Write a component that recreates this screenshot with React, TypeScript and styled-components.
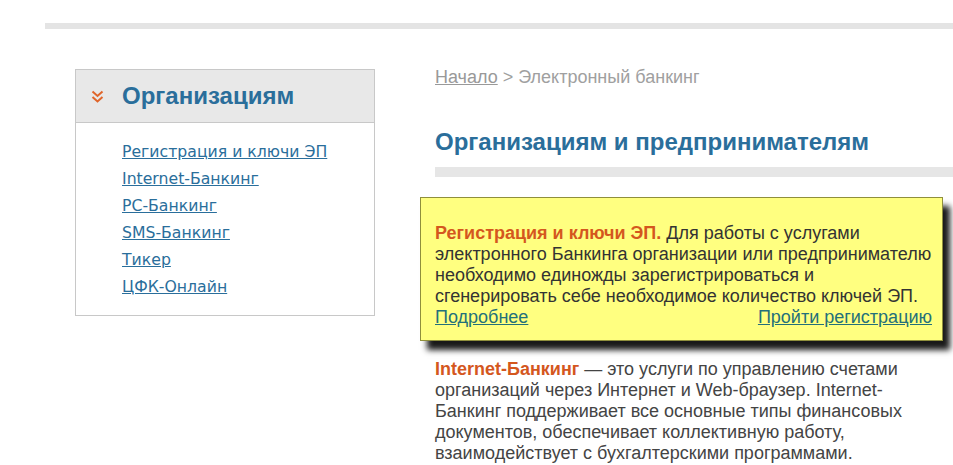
import React from 'react'
import styled, { createGlobalStyle } from 'styled-components'

const GlobalStyle = createGlobalStyle`
  html, body {
    margin: 0;
    padding: 0;
    background: #fff;
    font-family: 'Liberation Sans', Arial, sans-serif;
    overflow: hidden;
  }
`

const Page = styled.div`
  width: 953px;
  height: 465px;
  padding-top: 23px;
  box-sizing: border-box;
`

const TopBar = styled.div`
  height: 6px;
  margin-left: 45px;
  background: #e4e4e4;
`

const Columns = styled.div`
  display: flex;
  align-items: flex-start;
  gap: 45px;
  margin-top: 38px;
  padding-left: 75px;
`

const Sidebar = styled.div`
  width: 300px;
  margin-top: 2px;
  box-sizing: border-box;
  border: 1px solid #c8c8c8;
  flex-shrink: 0;
`

const SideHeader = styled.div`
  display: flex;
  align-items: center;
  height: 52px;
  padding-left: 15px;
  background: #e8e8e8;
  border-bottom: 1px solid #c8c8c8;
`

const SideTitle = styled.h3`
  margin: 0 0 0 18px;
  font-size: 24px;
  font-weight: bold;
  color: #2a6e9b;
`

const SideLinks = styled.ul`
  list-style: none;
  margin: 0;
  padding: 15px 0 15px 46px;
`

const SideItem = styled.li`
  line-height: 27px;
  font-family: 'DejaVu Sans', Verdana, sans-serif;
  font-size: 15.7px;
`

const SideLink = styled.a`
  color: #2a6e9b;
  text-decoration: underline;
`

const Main = styled.div`
  width: 533px;
`

const Breadcrumbs = styled.div`
  padding-left: 15px;
  font-size: 18px;
  line-height: 20px;
  color: #a0a0a0;
`

const CrumbLink = styled.a`
  color: #999;
  text-decoration: underline;
`

const Heading = styled.h1`
  margin: 42px 0 0;
  padding-left: 15px;
  font-size: 24px;
  line-height: 26px;
  font-weight: bold;
  color: #2a6e9b;
`

const Rule = styled.div`
  height: 10px;
  margin: 12px 0 0 15px;
  background: #e6e6e6;
`

const Notice = styled.div`
  margin: 20px 10px 0 0;
  padding: 25px 2px 12px 14px;
  background: #ffff80;
  border: 1px solid #8f8f3c;
  box-shadow: 7px 9px 6px rgba(0, 0, 0, 0.9);
  font-size: 18px;
  line-height: 21px;
  color: #333;
`

const Accent = styled.b`
  color: #d4571e;
`

const NoticeLinks = styled.div`
  display: flex;
  justify-content: space-between;
  padding-right: 8px;
`

const NoticeLink = styled.a`
  color: #24707a;
  text-decoration: underline;
`

const Paragraph = styled.p`
  margin: 18px 0 0;
  padding: 0 40px 0 15px;
  font-size: 18px;
  line-height: 21px;
  color: #444;
`

const Chevrons = () => (
  <svg width="13" height="13" viewBox="0 0 13 13">
    <polyline points="1.5,1.5 6.5,6 11.5,1.5" fill="none" stroke="#e0652a" strokeWidth="2" />
    <polyline points="1.5,7 6.5,11.5 11.5,7" fill="none" stroke="#e0652a" strokeWidth="2" />
  </svg>
)

const sideLinks = [
  'Регистрация и ключи ЭП',
  'Internet-Банкинг',
  'PC-Банкинг',
  'SMS-Банкинг',
  'Тикер',
  'ЦФК-Онлайн',
]

export default function App() {
  return (
    <Page>
      <GlobalStyle />
      <TopBar />
      <Columns>
        {/* Left menu */}
        <Sidebar>
          <SideHeader>
            <Chevrons />
            <SideTitle>Организациям</SideTitle>
          </SideHeader>
          <SideLinks>
            {sideLinks.map((l) => (
              <SideItem key={l}>
                <SideLink href="#">{l}</SideLink>
              </SideItem>
            ))}
          </SideLinks>
        </Sidebar>

        {/* Content */}
        <Main>
          <Breadcrumbs>
            <CrumbLink href="#">Начало</CrumbLink> &gt; Электронный банкинг
          </Breadcrumbs>
          <Heading>Организациям и предпринимателям</Heading>
          <Rule />
          <Notice>
            <Accent>Регистрация и ключи ЭП.</Accent> Для работы с услугами
            <br />
            электронного Банкинга организации или предпринимателю
            <br />
            необходимо единожды зарегистрироваться и
            <br />
            сгенерировать себе необходимое количество ключей ЭП.
            <NoticeLinks>
              <NoticeLink href="#">Подробнее</NoticeLink>
              <NoticeLink href="#">Пройти регистрацию</NoticeLink>
            </NoticeLinks>
          </Notice>
          <Paragraph>
            <Accent>Internet-Банкинг</Accent> — это услуги по управлению счетами организаций через
            Интернет и Web-браузер. Internet-Банкинг поддерживает все основные типы финансовых
            документов, обеспечивает коллективную работу, взаимодействует с бухгалтерскими
            программами.
          </Paragraph>
        </Main>
      </Columns>
    </Page>
  )
}
